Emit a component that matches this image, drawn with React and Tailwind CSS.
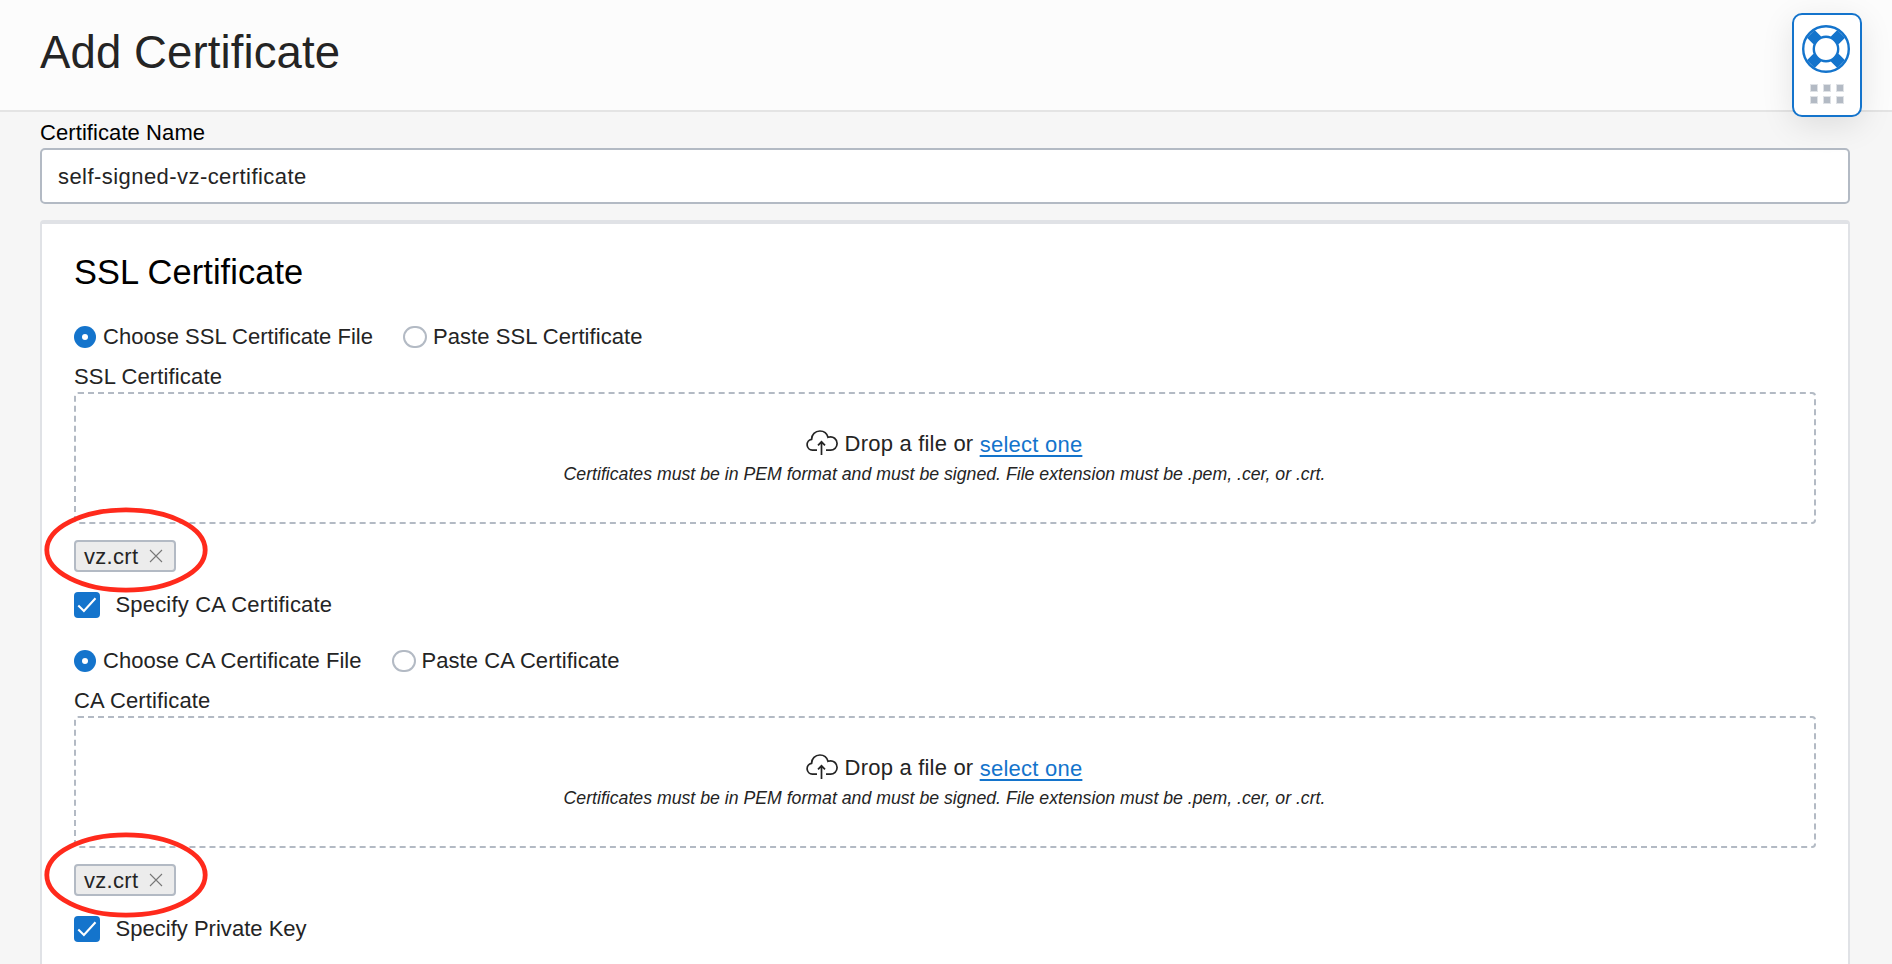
function LifeRing() {
  return (
    <svg className="-ml-[2px] size-12" viewBox="0 0 48 48" fill="none">
      <g stroke="#1474cc">
        <circle cx="24" cy="24" r="22.8" strokeWidth="2.4" />
        <circle cx="24" cy="24" r="12.2" strokeWidth="2.4" />
        <path d="M8.8 8.8L15.3 15.3M39.2 8.8L32.7 15.3M8.8 39.2L15.3 32.7M39.2 39.2L32.7 32.7" strokeWidth="11" />
      </g>
    </svg>
  );
}

function HelpWidget() {
  return (
    <div className="absolute left-[1792px] top-[13px] flex h-[104px] w-[70px] flex-col items-center rounded-[10px] border-2 border-[#1474cc] bg-white pt-[10px] shadow-[0_8px_32px_rgba(0,0,0,0.1)]">
      <LifeRing />
      <div className="-ml-px mt-3 grid grid-cols-3 gap-x-[7px] gap-y-[6px]">
        {[0, 1, 2, 3, 4, 5].map((i) => (
          <span key={i} className="size-[6px] bg-[#b3bac4] outline outline-[0.5px] outline-[#dfe2e6]" />
        ))}
      </div>
    </div>
  );
}

function Radio({ checked, label }) {
  return (
    <label className="flex items-center">
      {checked ? (
        <span className="flex size-[22px] items-center justify-center rounded-full bg-[#1474cc]">
          <span className="size-[6px] rounded-full bg-white" />
        </span>
      ) : (
        <span className="h-[22px] w-6 rounded-[11px] border-2 border-[#b3bac4] bg-white" />
      )}
      <span className={checked ? "-mt-[2px] ml-[7px] tracking-[0.02px]" : "-mt-[2px] ml-[6px] tracking-[0.06px]"}>{label}</span>
    </label>
  );
}

function CloudUpload() {
  return (
    <svg className="-ml-px mr-[7px] h-[26px] w-8" viewBox="0 0 32 26" fill="none" stroke="#242424" strokeWidth="1.7">
      <path d="M11 20.2H6.4A5.5 5.5 0 0 1 5.6 9.3C5.6 4.6 9.2 1 13.9 1C17.8 1 21 3.4 22 7.3C27.5 5.5 31.1 9.6 31.1 13.5C31.1 17.4 28 20.2 24.6 20.2H20" />
      <path d="M15.5 25V12M12 15.3L15.5 11.8L19 15.3" />
    </svg>
  );
}

function Checkbox({ label, tracking }) {
  return (
    <label className="mt-5 flex h-[26px] items-center">
      <span className="flex size-[26px] items-center justify-center rounded-[4px] bg-[#1474cc]">
        <svg className="size-[26px]" viewBox="0 0 26 26" fill="none" stroke="#fff" strokeWidth="2.1">
          <path d="M4.3 13.6L9.9 18.9L21.5 6.3" />
        </svg>
      </span>
      <span className={`-mt-px ml-[15.5px] ${tracking}`}>{label}</span>
    </label>
  );
}

function FileSection({ kind, next, nextTracking, ringTop }) {
  return (
    <section className="relative">
      <div className="flex h-[34px] items-center gap-[30px]">
        <Radio checked label={`Choose ${kind} Certificate File`} />
        <Radio label={`Paste ${kind} Certificate`} />
      </div>
      <div className="h-[38px] pt-[7px] leading-8 tracking-[0.14px]">{kind} Certificate</div>
      <div className="h-[132px] rounded-[4px] border-2 border-dashed border-[#b3bac4] pr-px pt-8 text-center">
        <div className="flex h-[34px] items-center justify-center leading-[34px]">
          <CloudUpload />
          <span className="mt-px whitespace-pre tracking-[0.2px]">Drop a file or </span>
          <a className="mt-[3px] tracking-[0.24px] text-[#1474cc] underline decoration-2 underline-offset-[3px]">select one</a>
        </div>
        <p className="text-[17.7px] italic leading-7">
          Certificates must be in PEM format and must be signed. File extension must be .pem, .cer, or .crt.
        </p>
      </div>
      <div className="mt-4 flex h-8 w-[102px] items-center rounded-[4px] border-2 border-[#b3bac4] bg-[#ececec] pl-[8px] leading-7">
        <span className="mt-[2px] tracking-[0.3px]">vz.crt</span>
        <svg className="ml-[11px] size-[14px]" viewBox="0 0 14 14" stroke="#777" strokeWidth="1.1">
          <path d="M1 1L13 13M13 1L1 13" />
        </svg>
      </div>
      <Checkbox label={next} tracking={nextTracking} />
      <svg className={`absolute left-[-30px] h-[86px] w-[164px] ${ringTop}`} viewBox="0 0 164 86" fill="none">
        <ellipse cx="82" cy="43" rx="79.2" ry="40.2" stroke="#ff2a1c" strokeWidth="4.8" />
      </svg>
    </section>
  );
}

export default function App() {
  return (
    <div className="relative h-[964px] w-[1892px] overflow-hidden bg-[#f6f6f6] font-['Liberation_Sans',sans-serif] text-[22px] text-[#242424]">
      <header className="h-28 border-b-2 border-[#e4e4e4] bg-[#fcfcfc] px-10">
        <h1 className="pt-px text-[45.5px] leading-[104px] tracking-[0.12px]">Add Certificate</h1>
      </header>
      <main className="pl-10 pr-[42px] pt-[5px]">
        <div className="h-[31px] leading-8 tracking-[0.08px] text-black">Certificate Name</div>
        <div className="flex h-14 items-center rounded-[5px] border-2 border-[#b3bac4] bg-white px-4 tracking-[0.44px]">self-signed-vz-certificate</div>
        <div className="mt-4 h-[800px] rounded-t-[4px] border-x-2 border-t-4 border-[#e0e2e6] bg-white px-8">
          <h2 className="h-24 text-[34.4px] leading-[96px] tracking-[0.08px] text-black">SSL Certificate</h2>
          <div className="flex flex-col gap-[26px]">
            <FileSection kind="SSL" next="Specify CA Certificate" nextTracking="tracking-[0.18px]" ringTop="top-[187px]" />
            <FileSection kind="CA" next="Specify Private Key" nextTracking="tracking-[0.02px]" ringTop="top-[188px]" />
          </div>
        </div>
      </main>
      <HelpWidget />
    </div>
  );
}
